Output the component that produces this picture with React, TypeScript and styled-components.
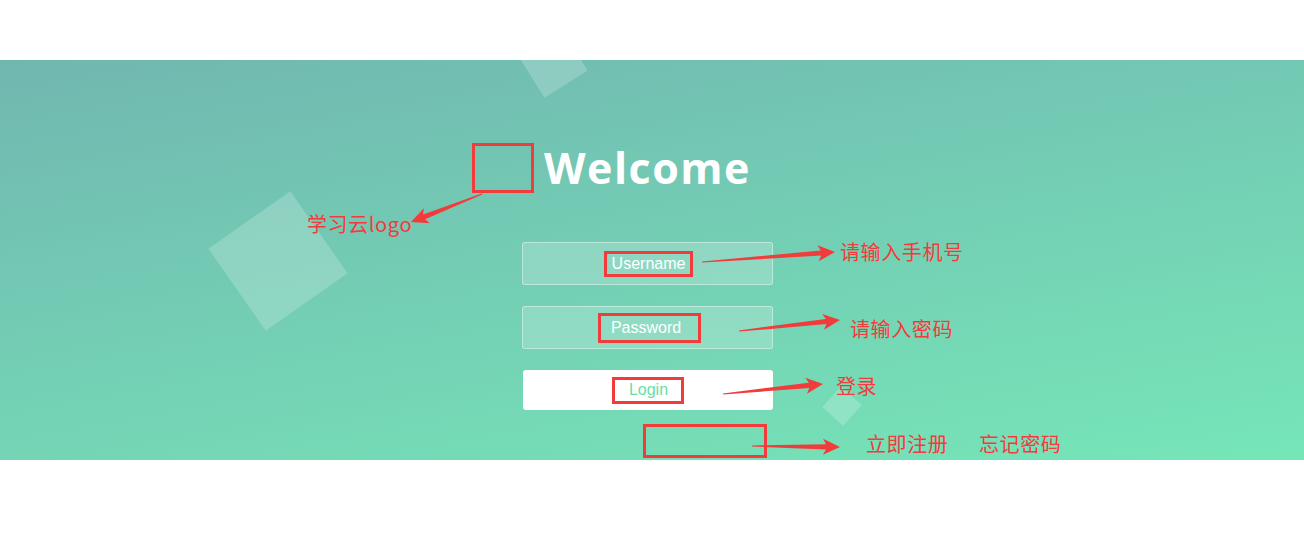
import React from "react";
import styled, { createGlobalStyle } from "styled-components";

const RED = "#f23b3b";

const GlobalStyle = createGlobalStyle`
  html, body {
    margin: 0;
    padding: 0;
    background: #fff;
  }
  body {
    font-family: "Liberation Sans", Arial, sans-serif;
  }
`;

const Page = styled.div`
  padding-top: 60px;
  height: 541px;
  box-sizing: border-box;
`;

const Panel = styled.section`
  position: relative;
  height: 400px;
  overflow: hidden;
  background: linear-gradient(170deg, #71b7b0 0%, #76e6b8 100%);
`;

const Bubble = styled.span<{ $size: number; $x: number; $y: number; $rotate: number }>`
  position: absolute;
  left: ${p => p.$x - p.$size / 2}px;
  top: ${p => p.$y - p.$size / 2}px;
  width: ${p => p.$size}px;
  height: ${p => p.$size}px;
  background: rgba(255, 255, 255, 0.2);
  transform: rotate(${p => p.$rotate}deg);
`;

const Column = styled.div`
  position: relative;
  display: flex;
  flex-direction: column;
  align-items: center;
  padding: 83px 9px 0 0;
`;

const Header = styled.div`
  display: flex;
  align-items: center;
  gap: 10px;
  height: 50px;
  margin-right: 72px;
`;

const LogoSlot = styled.div`
  width: 62px;
  height: 50px;
  box-sizing: border-box;
  border: 3px solid ${RED};
`;

const Title = styled.h1`
  margin: 0;
  font-family: "Open Sans", "DejaVu Sans", sans-serif;
  font-weight: 700;
  font-size: 43px;
  line-height: 50px;
  letter-spacing: 1.5px;
  color: #fff;
`;

const Form = styled.form`
  display: flex;
  flex-direction: column;
  gap: 21px;
  margin-top: 49px;
`;

const Field = styled.div`
  width: 251px;
  height: 43px;
  box-sizing: border-box;
  display: flex;
  align-items: center;
  justify-content: center;
  border: 1px solid rgba(255, 255, 255, 0.4);
  border-radius: 3px;
  background: rgba(255, 255, 255, 0.2);
  color: #fff;
  font-size: 16px;
`;

const LoginButton = styled.div`
  width: 250px;
  height: 40px;
  margin-left: 1px;
  display: flex;
  align-items: center;
  justify-content: center;
  border-radius: 3px;
  background: #fff;
  color: #62dfa9;
  font-size: 16px;
`;

const Marked = styled.span<{ $pad: string; $dx?: number }>`
  display: inline-block;
  border: 3px solid ${RED};
  padding: ${p => p.$pad};
  margin-left: ${p => p.$dx ?? 0}px;
  line-height: 20px;
`;

const LinksSlot = styled.div`
  width: 124px;
  height: 34px;
  box-sizing: border-box;
  margin: 14px 0 0 115px;
  border: 3px solid ${RED};
`;

const Notes = styled.svg`
  position: absolute;
  inset: 0;
  pointer-events: none;
`;

const Note = styled.span<{ $x: number; $y: number }>`
  position: absolute;
  left: ${p => p.$x}px;
  top: ${p => p.$y - 11}px;
  font-family: "Noto Sans CJK SC", "Liberation Sans", sans-serif;
  font-size: 20px;
  line-height: 22px;
  letter-spacing: 0.6px;
  color: ${RED};
  white-space: nowrap;
`;

type Pt = [number, number];

const arrowPoints = (from: Pt, to: Pt) => {
  const dx = to[0] - from[0];
  const dy = to[1] - from[1];
  const len = Math.hypot(dx, dy);
  const ux = dx / len;
  const uy = dy / len;
  const nx = -uy;
  const ny = ux;
  const head = 17;
  const bx = to[0] - ux * head;
  const by = to[1] - uy * head;
  const pt = (x: number, y: number, w: number) =>
    `${(x + nx * w).toFixed(1)},${(y + ny * w).toFixed(1)}`;
  return [
    pt(from[0], from[1], 0.6),
    pt(bx + ux * 3, by + uy * 3, 2.6),
    pt(bx, by, 8),
    pt(to[0], to[1], 0),
    pt(bx, by, -8),
    pt(bx + ux * 3, by + uy * 3, -2.6),
    pt(from[0], from[1], -0.6),
  ].join(" ");
};

const arrows: [Pt, Pt][] = [
  [[482, 134], [411, 162]],
  [[702, 202], [835, 192]],
  [[739, 271], [840, 260]],
  [[723, 334], [823, 324]],
  [[752, 386], [840, 387]],
];

const notes = [
  { x: 307, y: 164, text: "学习云logo" },
  { x: 840, y: 192, text: "请输入手机号" },
  { x: 850, y: 269, text: "请输入密码" },
  { x: 836, y: 326, text: "登录" },
  { x: 866, y: 384, text: "立即注册" },
  { x: 979, y: 384, text: "忘记密码" },
];

const App: React.FC = () => (
  <>
    <GlobalStyle />
    <Page>
      <Panel>
        <Bubble $size={100} $x={278} $y={201} $rotate={-35} />
        <Bubble $size={51} $x={552} $y={2} $rotate={-32} />
        <Bubble $size={28} $x={842} $y={346} $rotate={42} />

        <Column>
          <Header>
            <LogoSlot />
            <Title>Welcome</Title>
          </Header>
          <Form onSubmit={e => e.preventDefault()}>
            <Field>
              <Marked $pad="0 5px" $dx={2}>Username</Marked>
            </Field>
            <Field>
              <Marked $pad="2px 17px 2px 10px" $dx={4}>Password</Marked>
            </Field>
            <LoginButton>
              <Marked $pad="0 13px 1px 14px">Login</Marked>
            </LoginButton>
          </Form>
          <LinksSlot />
        </Column>

        <Notes width="1304" height="400" viewBox="0 0 1304 400">
          {arrows.map(([from, to], i) => (
            <polygon key={i} points={arrowPoints(from, to)} fill={RED} />
          ))}
        </Notes>
        {notes.map(n => (
          <Note key={n.text} $x={n.x} $y={n.y}>
            {n.text}
          </Note>
        ))}
      </Panel>
    </Page>
  </>
);

App.displayName = "App";

export default App;
